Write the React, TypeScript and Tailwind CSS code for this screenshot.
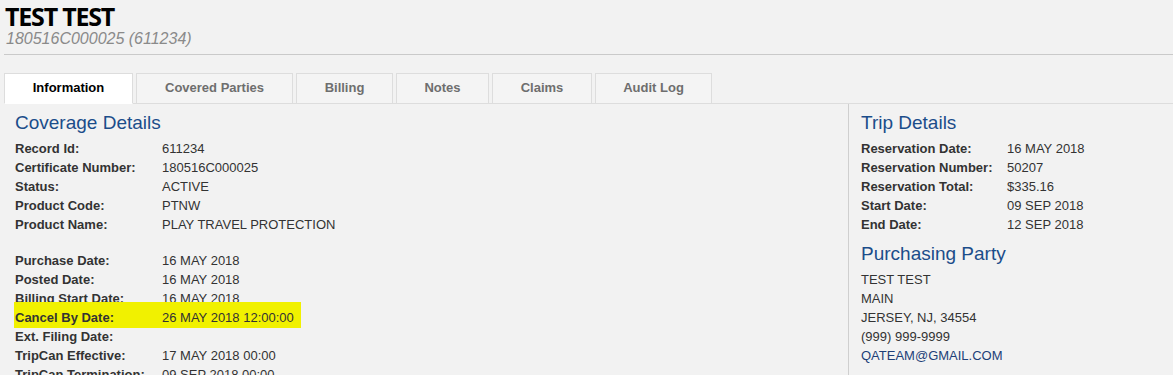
import React from "react";

const tabs: [string, string][] = [
  ["Information", "w-[129px]"],
  ["Covered Parties", "w-[157px]"],
  ["Billing", "w-[97px]"],
  ["Notes", "w-[93px]"],
  ["Claims", "w-[100px]"],
  ["Audit Log", "w-[117px]"],
];

const coverage1: [string, string][] = [
  ["Record Id:", "611234"],
  ["Certificate Number:", "180516C000025"],
  ["Status:", "ACTIVE"],
  ["Product Code:", "PTNW"],
  ["Product Name:", "PLAY TRAVEL PROTECTION"],
];

const coverage2: [string, string, boolean?][] = [
  ["Purchase Date:", "16 MAY 2018"],
  ["Posted Date:", "16 MAY 2018"],
  ["Billing Start Date:", "16 MAY 2018"],
  ["Cancel By Date:", "26 MAY 2018 12:00:00", true],
  ["Ext. Filing Date:", ""],
  ["TripCan Effective:", "17 MAY 2018 00:00"],
  ["TripCan Termination:", "09 SEP 2018 00:00"],
];

const trip: [string, string][] = [
  ["Reservation Date:", "16 MAY 2018"],
  ["Reservation Number:", "50207"],
  ["Reservation Total:", "$335.16"],
  ["Start Date:", "09 SEP 2018"],
  ["End Date:", "12 SEP 2018"],
];

function Row({ label, value, w }: { label: string; value: string; w: string }) {
  return (
    <div className="flex h-[19px] leading-[19px] whitespace-nowrap">
      <div className={`${w} shrink-0 font-bold`}>{label}</div>
      <div>{value}</div>
    </div>
  );
}

export default function App() {
  return (
    <div className="min-h-screen bg-[#f2f2f2] pl-[4px] font-['Liberation_Sans',Arial,sans-serif] text-[13px] text-[#333]">
      <div className="border-b border-[#cacaca] pt-[4px] pb-[6px]">
        <div className="pl-[1px] font-['Open_Sans',sans-serif] text-[25px] leading-[25px] font-bold tracking-[-1.2px] text-black">
          TEST TEST
        </div>
        <div className="pl-[2px] text-[16px] leading-[19px] italic text-[#8a8a8a]">180516C000025 (611234)</div>
      </div>

      <div className="mt-[18px] flex gap-[3px] border-b border-[#dddddd]">
        {tabs.map(([t, w], i) => (
          <div
            key={t}
            className={
              i === 0
                ? `${w} -mb-px flex h-[31px] items-center justify-center border border-[#dddddd] border-b-white bg-white pb-[2px] font-bold text-black`
                : `${w} -mb-px flex h-[31px] items-center justify-center border border-[#dddddd] bg-[#f4f4f4] pb-[2px] font-bold text-[#6e6e6e]`
            }
          >
            {t}
          </div>
        ))}
      </div>

      <div className="flex">
        <div className="w-[844px] shrink-0 pl-[11px] pt-[7px]">
          <div className="mb-[4px] text-[19px] leading-[24px] text-[#1b4d8a]">Coverage Details</div>
          {coverage1.map(([l, v]) => (
            <Row key={l} label={l} value={v} w="w-[147px]" />
          ))}
          <div className="h-[17px]" />
          {coverage2.map(([l, v, hl]) =>
            hl ? (
              <div
                key={l}
                className="relative -mt-[6px] -mb-[1px] -ml-[1px] flex h-[26px] w-[287px] bg-[#f1f100] pt-[6px] pb-[1px] pl-[1px] leading-[19px] whitespace-nowrap"
              >
                <div className="w-[147px] shrink-0 font-bold">{l}</div>
                <div>{v}</div>
              </div>
            ) : (
              <Row key={l} label={l} value={v} w="w-[147px]" />
            )
          )}
        </div>

        <div className="flex-1 border-l border-[#cfcfcf] pl-[12px] pt-[7px]">
          <div className="mb-[4px] text-[19px] leading-[24px] text-[#1b4d8a]">Trip Details</div>
          {trip.map(([l, v]) => (
            <Row key={l} label={l} value={v} w="w-[146px]" />
          ))}
          <div className="mt-[8px] mb-[4px] text-[19px] leading-[24px] text-[#1b4d8a]">Purchasing Party</div>
          <div className="leading-[19px]">
            <div>TEST TEST</div>
            <div>MAIN</div>
            <div>JERSEY, NJ, 34554</div>
            <div>(999) 999-9999</div>
            <div className="text-[#1d3f78]">QATEAM@GMAIL.COM</div>
          </div>
        </div>
      </div>
    </div>
  );
}
